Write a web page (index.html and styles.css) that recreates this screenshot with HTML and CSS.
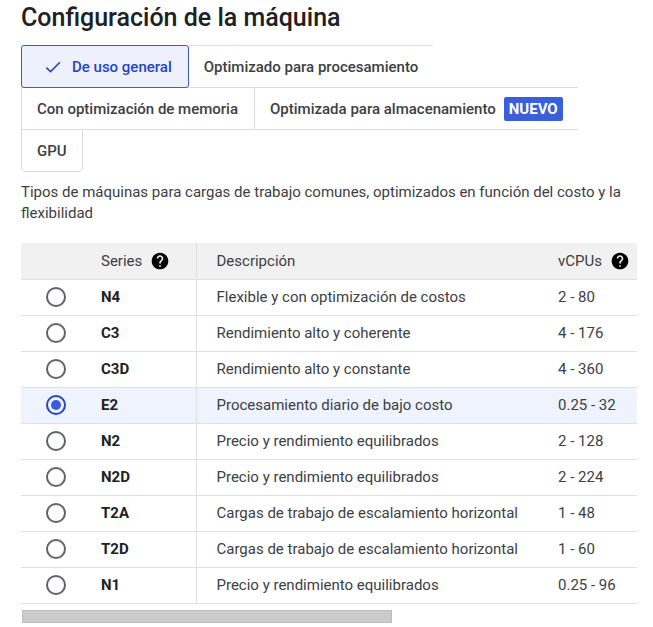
FILE: index.html
```html
<!DOCTYPE html>
<html lang="es">
<head>
<meta charset="utf-8">
<link rel="stylesheet" href="styles.css">
</head>
<body>
<div class="page">
  <h1 class="title">Configuración de la máquina</h1>
  <div class="tabs">
    <div class="tab tab-selected">
      <svg class="check" viewBox="0 0 24 24" width="20" height="20"><path d="M9 16.17L4.83 12l-1.42 1.41L9 19 21 7l-1.41-1.41z" fill="currentColor"/></svg>
      <span>De uso general</span>
    </div>
    <div class="tab tab-open">Optimizado para procesamiento</div>
    <div class="tab tab-first">Con optimización de memoria</div>
    <div class="tab">Optimizada para almacenamiento <span class="badge">NUEVO</span></div>
    <div class="tab tab-last">GPU</div>
  </div>
  <p class="desc">Tipos de máquinas para cargas de trabajo comunes, optimizados en función del costo y la flexibilidad</p>
  <div class="table-wrap">
    <table class="grid">
      <thead>
        <tr>
          <th class="c-radio"></th>
          <th class="c-series"><span class="hcell">Series <svg class="help" viewBox="0 0 24 24" width="20" height="20"><path d="M12 2C6.48 2 2 6.48 2 12s4.48 10 10 10 10-4.48 10-10S17.52 2 12 2zm1 17h-2v-2h2v2zm2.07-7.75l-.9.92C13.45 12.9 13 13.5 13 15h-2v-.5c0-1.1.45-2.1 1.17-2.83l1.24-1.26c.37-.36.59-.86.59-1.41 0-1.1-.9-2-2-2s-2 .9-2 2H8c0-2.21 1.79-4 4-4s4 1.790 4 4c0 .88-.36 1.68-.93 2.25z" fill="currentColor"/></svg></span></th>
          <th class="c-desc">Descripción</th>
          <th class="c-cpu"><span class="hcell">vCPUs <svg class="help" viewBox="0 0 24 24" width="20" height="20"><path d="M12 2C6.48 2 2 6.48 2 12s4.48 10 10 10 10-4.48 10-10S17.52 2 12 2zm1 17h-2v-2h2v2zm2.07-7.75l-.9.92C13.45 12.9 13 13.5 13 15h-2v-.5c0-1.1.45-2.1 1.17-2.83l1.24-1.26c.37-.36.59-.86.59-1.41 0-1.1-.9-2-2-2s-2 .9-2 2H8c0-2.21 1.79-4 4-4s4 1.79 4 4c0 .88-.36 1.68-.93 2.25z" fill="currentColor"/></svg></span></th>
        </tr>
      </thead>
      <tbody>
        <tr><td class="c-radio"><span class="radio"></span></td><td class="c-series">N4</td><td class="c-desc">Flexible y con optimización de costos</td><td class="c-cpu">2 - 80</td></tr>
        <tr><td class="c-radio"><span class="radio"></span></td><td class="c-series">C3</td><td class="c-desc">Rendimiento alto y coherente</td><td class="c-cpu">4 - 176</td></tr>
        <tr><td class="c-radio"><span class="radio"></span></td><td class="c-series">C3D</td><td class="c-desc">Rendimiento alto y constante</td><td class="c-cpu">4 - 360</td></tr>
        <tr class="row-selected"><td class="c-radio"><span class="radio radio-on"></span></td><td class="c-series">E2</td><td class="c-desc">Procesamiento diario de bajo costo</td><td class="c-cpu">0.25 - 32</td></tr>
        <tr><td class="c-radio"><span class="radio"></span></td><td class="c-series">N2</td><td class="c-desc">Precio y rendimiento equilibrados</td><td class="c-cpu">2 - 128</td></tr>
        <tr><td class="c-radio"><span class="radio"></span></td><td class="c-series">N2D</td><td class="c-desc">Precio y rendimiento equilibrados</td><td class="c-cpu">2 - 224</td></tr>
        <tr><td class="c-radio"><span class="radio"></span></td><td class="c-series">T2A</td><td class="c-desc">Cargas de trabajo de escalamiento horizontal</td><td class="c-cpu">1 - 48</td></tr>
        <tr><td class="c-radio"><span class="radio"></span></td><td class="c-series">T2D</td><td class="c-desc">Cargas de trabajo de escalamiento horizontal</td><td class="c-cpu">1 - 60</td></tr>
        <tr><td class="c-radio"><span class="radio"></span></td><td class="c-series">N1</td><td class="c-desc">Precio y rendimiento equilibrados</td><td class="c-cpu">0.25 - 96</td></tr>
      </tbody>
    </table>
  </div>
  <div class="scrollbar"><div class="thumb"></div></div>
</div>
</body>
</html>
```
FILE: styles.css
```css
* { box-sizing: border-box; }
html, body { margin: 0; padding: 0; background: #fff; }
body {
  font-family: Roboto, "Liberation Sans", Arial, sans-serif;
  color: #3c4043;
  font-size: 15px;
}
.page {
  padding: 3px 16px 0 21px;
}
.title {
  margin: 0;
  font-size: 25px;
  font-weight: 500;
  line-height: 30px;
  color: #202124;
}
.tabs {
  display: flex;
  flex-wrap: wrap;
  width: 616px;
  margin-top: 12px;
}
.tab {
  display: flex;
  align-items: center;
  height: 43px;
  padding: 0 15px 0 15px;
  font-size: 15px;
  font-weight: 500;
  color: #3c4043;
  border-top: 1px solid #dadce0;
  border-bottom: 1px solid #dadce0;
  border-left: 1px solid #dadce0;
  margin-bottom: -1px;
}
.tab-selected {
  padding: 0 16px 0 21px;
  background: #eef0fc;
  color: #2346c6;
  border: 1px solid #3b5bdb;
  border-radius: 3px;
  position: relative;
  z-index: 1;
}
.check { margin-right: 9px; color: #2346c6; }
.tab-open { border-left: none; }
.tab-first { padding: 0 16px 0 15px; }
.tab-last {
  border: 1px solid #dadce0;
  border-radius: 0 0 4px 4px;
  padding: 0 15px;
}
.badge {
  display: inline-block;
  margin-left: 8px;
  background: #3b5fdb;
  color: #fff;
  font-weight: 700;
  font-size: 15px;
  line-height: 24px;
  padding: 0 5px;
  border-radius: 2px;
}
.desc {
  margin: 11px 0 0 0;
  font-size: 15px;
  line-height: 21px;
  color: #3c4043;
  width: 616px;
}
.table-wrap {
  width: 616px;
  overflow: hidden;
  margin-top: 19px;
}
.grid {
  border-collapse: collapse;
  width: 616px;
  table-layout: fixed;
}
.grid th, .grid td {
  height: 36px;
  padding: 0;
  text-align: left;
  vertical-align: middle;
  border-bottom: 1px solid #e0e0e0;
  white-space: nowrap;
}
.grid thead th {
  background: #f1f1f1;
  font-weight: 400;
  color: #3c4043;
}
.c-radio { width: 64px; }
.c-series { width: 111px; padding-left: 16px !important; border-right: 1px solid #e0e0e0; }
.c-desc { width: 345px; padding-left: 20px !important; }
.c-cpu { width: 96px; padding-left: 17px !important; }
.grid td.c-series { font-weight: 700; color: #202124; }
.grid td.c-desc, .grid td.c-cpu { color: #3c4043; }
.hcell { display: inline-flex; align-items: center; gap: 8px; }
.help { color: #000; display: block; }
.radio {
  display: block;
  width: 20px;
  height: 20px;
  margin-left: 25px;
  border: 2px solid #5f6368;
  border-radius: 50%;
}
.radio-on {
  border-color: #2346c6;
  position: relative;
}
.radio-on::after {
  content: "";
  position: absolute;
  left: 3px;
  top: 3px;
  width: 10px;
  height: 10px;
  border-radius: 50%;
  background: #3b5bdb;
}
.row-selected td { background: #eef3fd; }
.scrollbar {
  width: 616px;
  height: 14px;
  margin-top: 6px;
}
.thumb {
  width: 370px;
  height: 13px;
  margin-left: 1px;
  background: #cbcbcb;
  border: 1px solid #bdbdbd;
}
```
